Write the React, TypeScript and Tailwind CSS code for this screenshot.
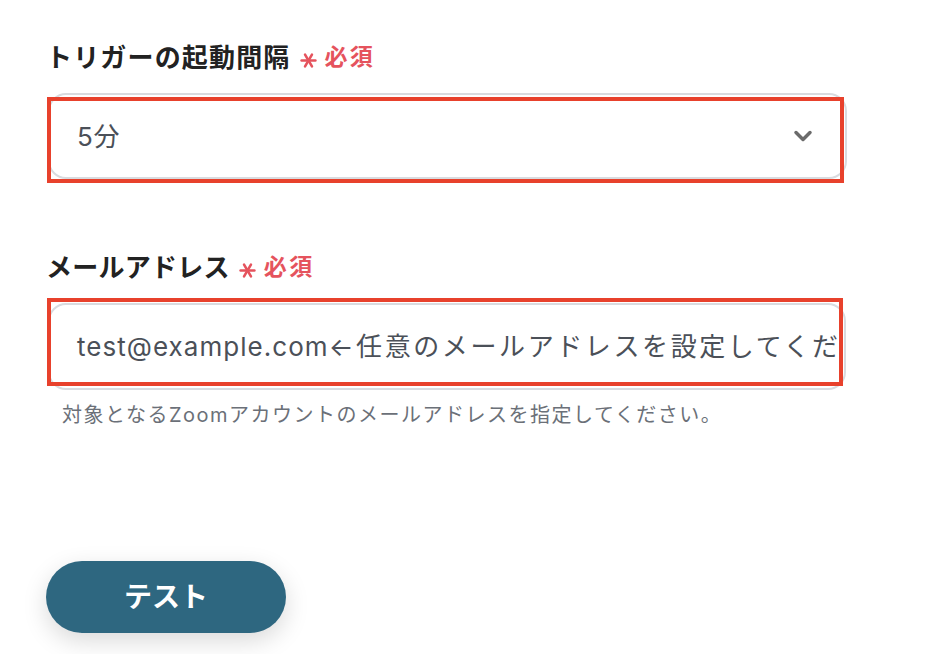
import { ChevronDown } from 'lucide-react';

const font = { fontFamily: 'Inter, "Noto Sans CJK JP", sans-serif' };

function Required() {
  return (
    <span className="ml-[9px] flex items-center text-[#e5535d]">
      <svg width="17" height="17" viewBox="0 0 16 16" className="mt-[6px]" stroke="currentColor" strokeWidth="2.4" strokeLinecap="round">
        <line x1="1.5" y1="8" x2="14.5" y2="8" />
        <line x1="4.75" y1="2.4" x2="11.25" y2="13.6" />
        <line x1="11.25" y1="2.4" x2="4.75" y2="13.6" />
      </svg>
      <span className="ml-[8px] text-[23px] font-bold tracking-[0.1em]">必須</span>
    </span>
  );
}

export default function App() {
  return (
    <div className="min-h-screen bg-white px-[46px] pt-[39px]" style={font}>
      {/* トリガーの起動間隔 */}
      <div className="flex items-center h-[36px]">
        <span className="text-[26px] font-bold text-[#222] tracking-[0.045em]">トリガーの起動間隔</span>
        <Required />
      </div>
      <div className="relative mt-[18px] ml-[2px] w-[799px]">
        <div className="flex h-[86px] items-center justify-between rounded-[18px] border-2 border-[#d9dbdf] bg-white pl-[27px] pr-[28px]">
          <span className="text-[26px] text-[#4b5058] tracking-[0.03em]">5分</span>
          <ChevronDown className="h-[28px] w-[28px] text-[#6b6b6b]" strokeWidth={3} />
        </div>
        <div className="pointer-events-none absolute left-[-1px] right-[3px] top-[4px] bottom-[-4px] border-4 border-[#e8412c]" />
      </div>

      {/* メールアドレス */}
      <div className="mt-[70px] flex items-center h-[36px]">
        <span className="text-[26px] font-bold text-[#222] tracking-[0.01em]">メールアドレス</span>
        <Required />
      </div>
      <div className="relative mt-[18px] ml-[2px] w-[798px]">
        <div className="flex h-[87px] items-center overflow-hidden rounded-[18px] border-2 border-[#d9dbdf] bg-white pl-[27px] pr-[6px]">
          <span className="whitespace-nowrap text-[26px] text-[#4b5058]">
            <span className="tracking-[0.04em]">test@example.com</span>
            <span className="tracking-[0.1em]">←任意のメールアドレスを設定してください</span>
          </span>
        </div>
        <div className="pointer-events-none absolute left-[-1px] right-[3px] top-[-5px] bottom-[4px] border-4 border-[#e8412c]" />
      </div>
      <p className="mt-[11px] ml-[16px] text-[20px] leading-[28px] text-[#6b7078] tracking-[0.075em]">
        対象となるZoomアカウントのメールアドレスを指定してください。
      </p>

      {/* テスト */}
      <button className="mt-[132px] flex h-[72px] w-[240px] items-center justify-center rounded-full bg-[#2e6780] text-[28px] font-bold text-white shadow-[0_8px_24px_rgba(0,0,0,0.15)]">
        テスト
      </button>
    </div>
  );
}
